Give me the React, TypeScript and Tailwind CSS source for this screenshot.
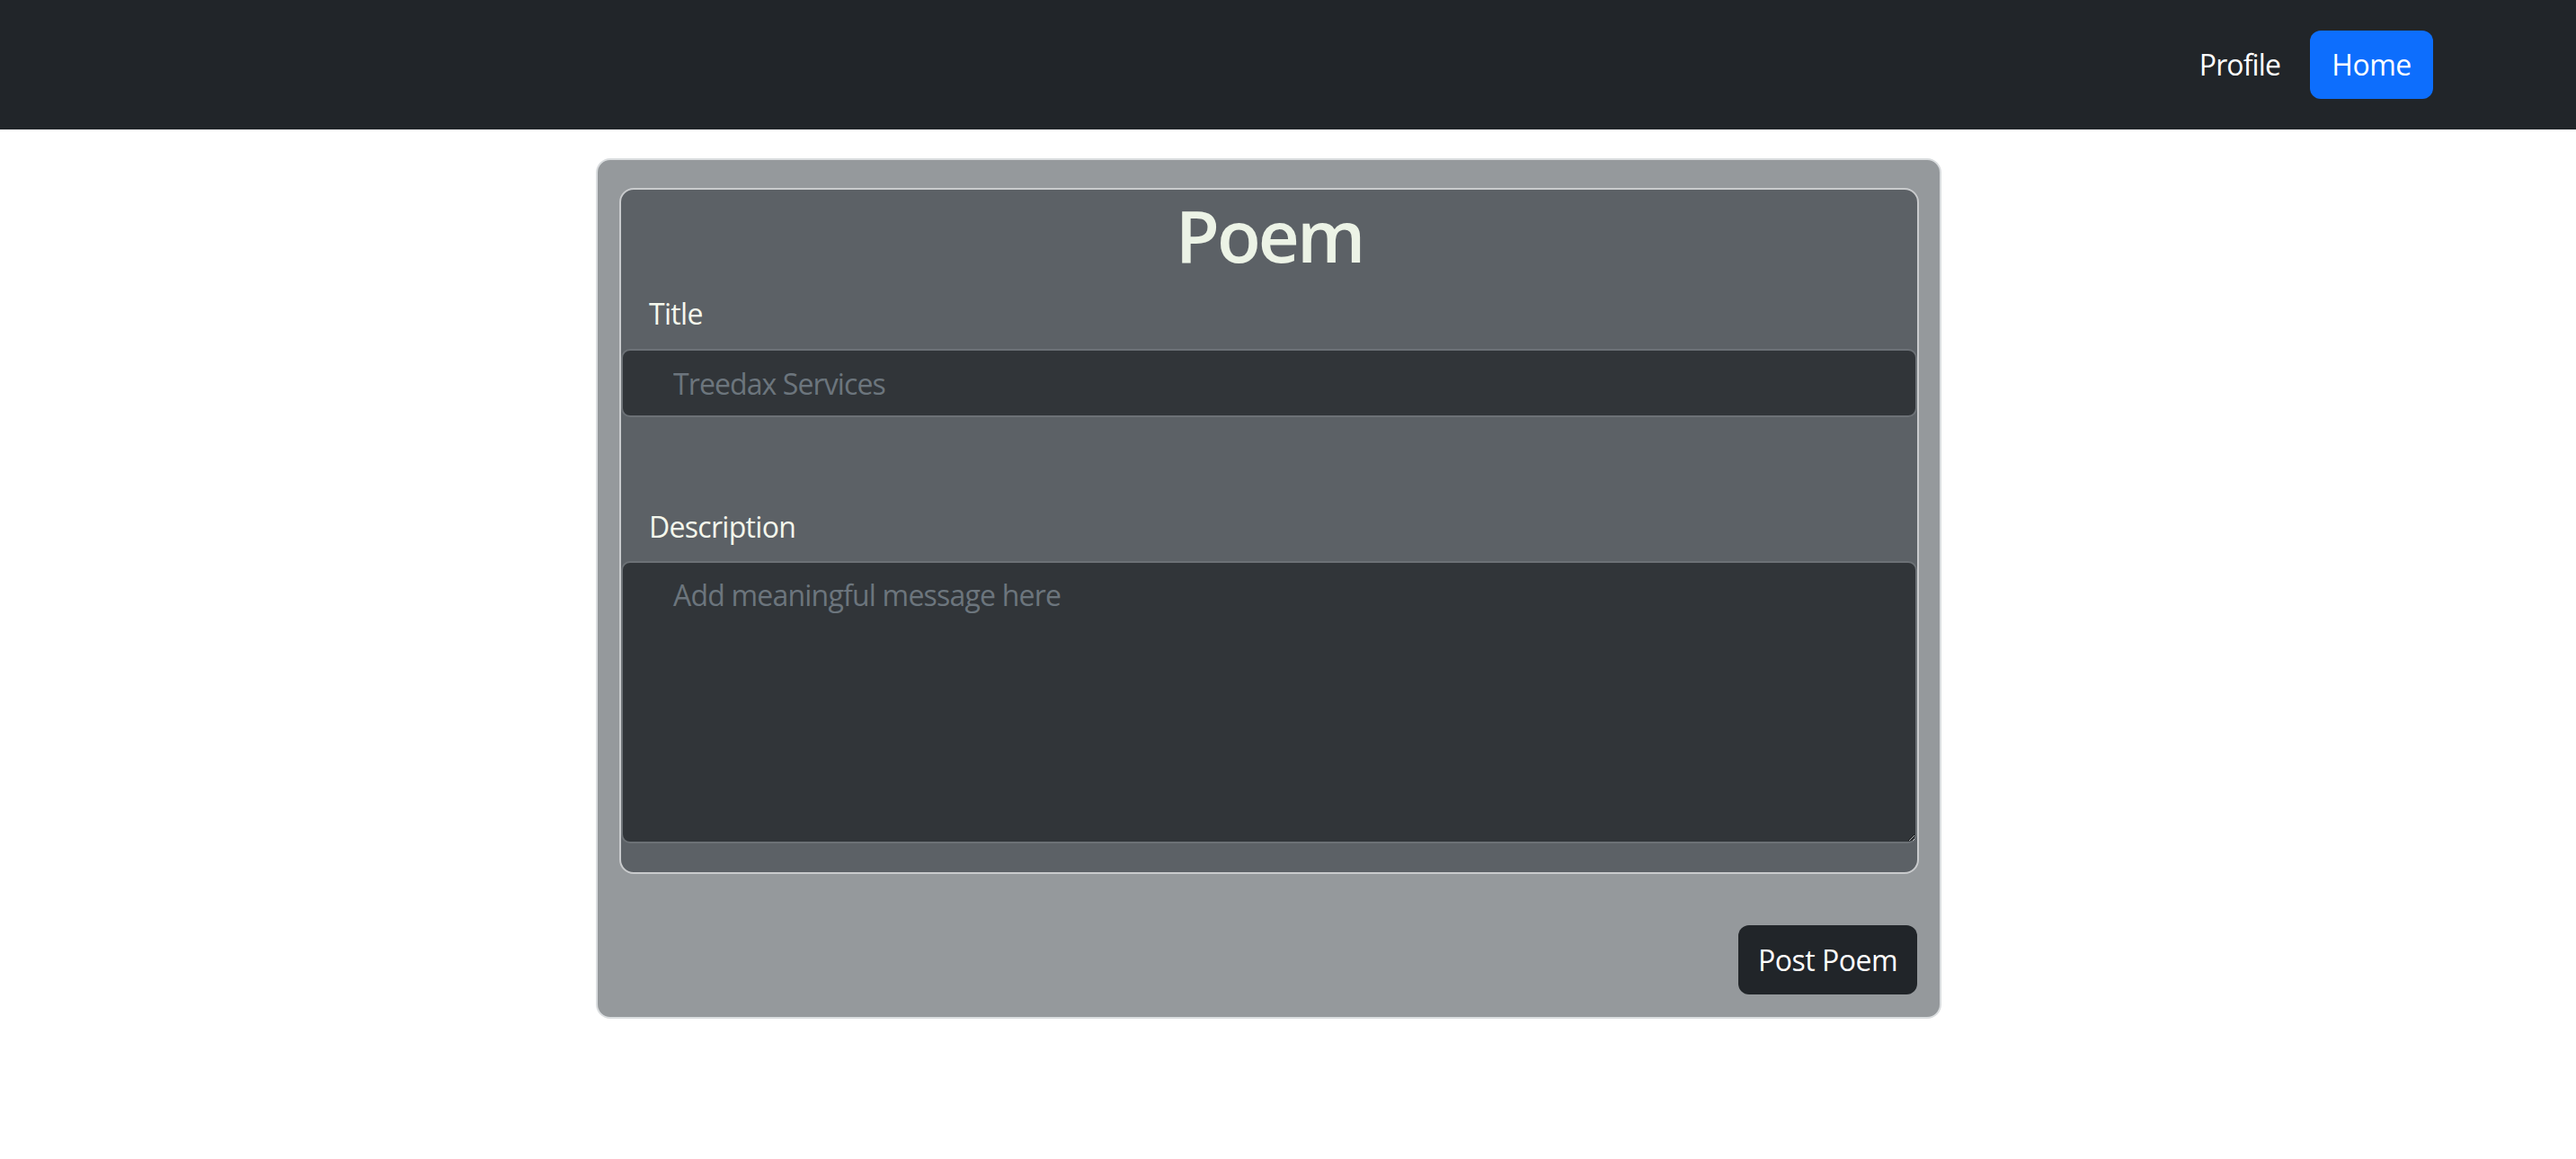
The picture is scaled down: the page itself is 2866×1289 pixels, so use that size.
import React from "react";

const font = { fontFamily: '"Open Sans", "Noto Sans", sans-serif' };

export default function App() {
  return (
    <div className="min-h-[1289px] bg-white" style={font}>
      <nav className="h-[144px] bg-[#212529] flex items-center justify-end pr-[159px]">
        <a className="text-white text-[32px] leading-[48px] px-[16px] mr-[17px] tracking-[-0.9px]">Profile</a>
        <button className="h-[76px] w-[137px] rounded-[12px] bg-[#0d6efd] text-white text-[32px] leading-[48px] tracking-[-0.5px]">
          Home
        </button>
      </nav>

      <div className="ml-[663px] mt-[32px] w-[1497px] rounded-[16px] border-2 border-[#dadddf] bg-[#95999c] pl-[24px] pr-[23px] pt-[31px] pb-[25px]">
        <div className="rounded-[16px] border-2 border-[#c9cbcd] bg-[#5c6166] pb-[32px]">
          <h1 className="pt-[2px] text-center text-[80px] leading-[96px] font-semibold text-[#ecf3e6] tracking-[-3px]">
            Poem
          </h1>
          <label className="mt-[16px] block pl-[31px] text-[32px] leading-[48px] text-[#f4f7ec] tracking-[-0.7px]">Title</label>
          <input
            className="mt-[15px] block h-[76px] w-full rounded-[10px] border-2 border-[#6c7176] bg-[#313539] pl-[56px] text-[32px] text-white outline-none placeholder:text-[#6c757d] tracking-[-0.9px]"
            placeholder="Treedax Services"
          />
          <label className="mt-[98px] block pl-[31px] text-[32px] leading-[48px] text-[#f4f7ec] tracking-[-0.7px]">
            Description
          </label>
          <textarea
            className="mt-[14px] block h-[314px] w-full rounded-[10px] border-2 border-[#6c7176] bg-[#313539] pl-[56px] pt-[12px] text-[32px] leading-[48px] text-white outline-none placeholder:text-[#6c757d] tracking-[-0.8px]"
            placeholder="Add meaningful message here"
          />
        </div>
        <div className="mt-[57px] flex justify-end pr-[2px]">
          <button className="h-[77px] w-[199px] rounded-[12px] bg-[#212529] text-white text-[32px] leading-[48px] tracking-[-0.5px]">
            Post Poem
          </button>
        </div>
      </div>
    </div>
  );
}
